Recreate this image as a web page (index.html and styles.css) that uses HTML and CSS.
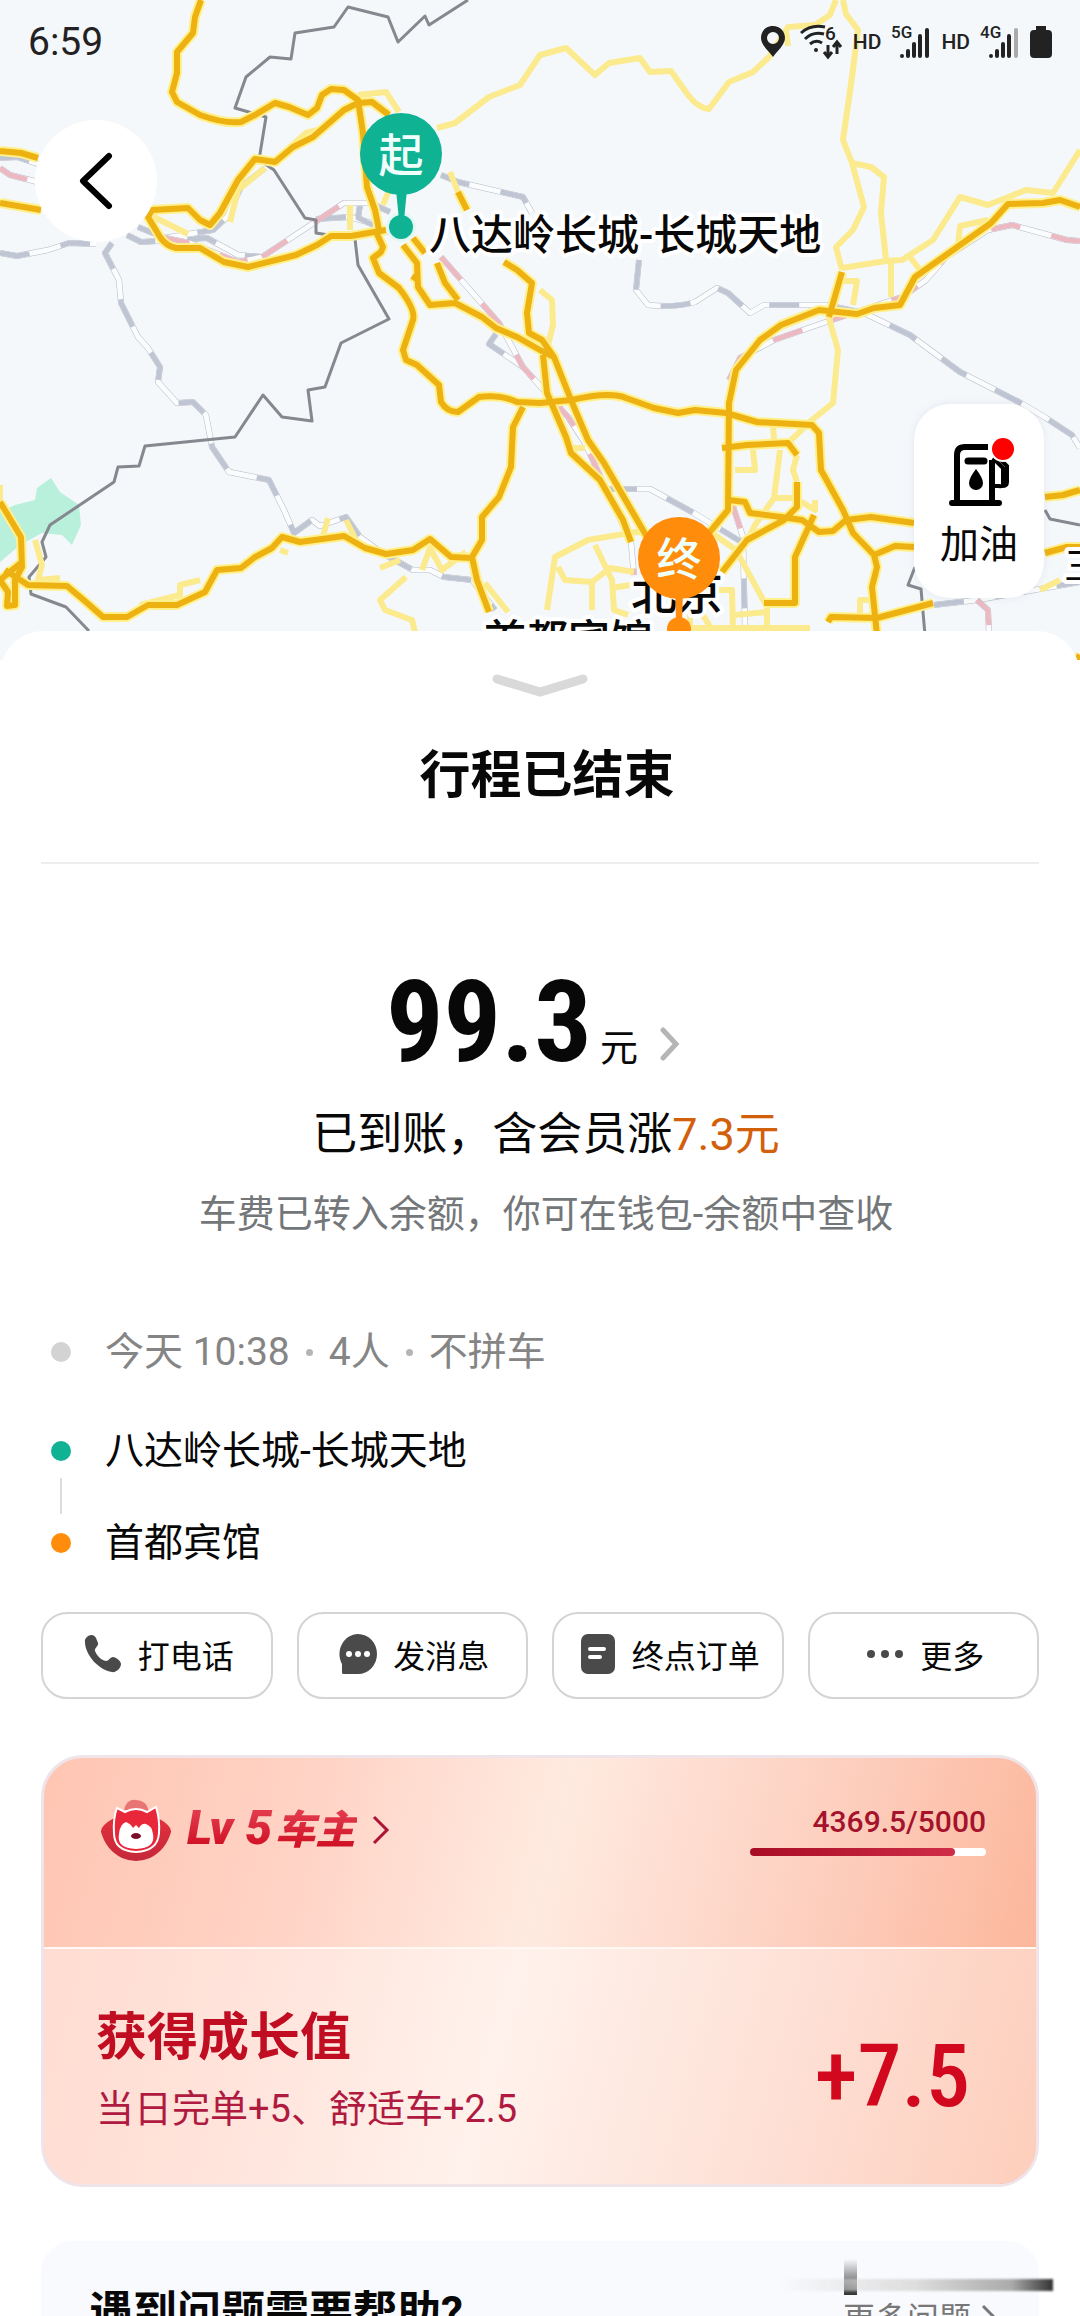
FILE: index.html
```html
<!DOCTYPE html>
<html lang="zh-CN">
<head>
    <meta charset="UTF-8">
    <meta name="viewport" content="width=device-width, initial-scale=1.0">
    <title>行程已结束</title>
    <link rel="stylesheet" href="styles.css">
</head>
<body>
<div class="app">

    <section class="map">
        <svg class="map-canvas" viewBox="0 0 1080 660" role="img" aria-label="路线地图">
            <rect width="1080" height="660" fill="#f5f8fb"/>
            <path fill="#b9f0dc" d="M0 512L15 505L35 500L37 488L51 478L60 492L79 505L81 525L72 545L62 535L42 533L20 545L0 562Z"/>

            <!-- rail lines -->
            <defs>
                <g id="rail">
                    <path d="M0 253L17 256L48 250L69 243L96 244M112 243L105 253L119 280L121 303L138 337L148 348L160 367L158 382L177 403L193 402L206 415L212 447L229 472L269 480L284 510L294 533L312 520L320 526L346 517L360 537L382 553L413 570L430 570L444 577L472 580L495 610"/>
                    <path d="M0 158L17 157L38 164M127 235L141 242L207 238L238 255L262 257"/>
                    <path d="M138 227L165 238L213 230L227 217L241 187L265 168M316 219L350 217L375 224M360 205L358 218L389 232M370 203L390 212"/>
                    <path d="M441 175L458 182L523 197L532 213M639 260L636 290L648 305Q675 308 695 302L717 288L728 293L750 313L764 305L826 305L864 313L910 335L960 372L1019 402L1046 418L1072 435L1080 448"/>
                    <path d="M496 334L489 344L523 367M607 489L650 489L692 512L743 543L745 626M934 605L977 600L1080 582"/>
                </g>
                <g id="rail-pink">
                    <path d="M0 168L10 175L38 182M262 257L344 203L370 203M160 237L190 243L238 262L262 257"/>
                    <path d="M441 257L499 323L523 367L568 417L585 443L605 487L631 542L634 575"/>
                    <path d="M731 500L743 537M977 600L988 610L989 632M774 340L826 322L902 297L926 280L946 257L988 230L1012 225L1067 240L1080 241M729 380L740 358L774 340"/>
                </g>
            </defs>
            <use href="#rail" class="rail-edge"/>
            <use href="#rail" class="rail-gap"/>
            <use href="#rail" class="rail-dash"/>
            <use href="#rail-pink" class="rail-edge"/>
            <use href="#rail-pink" class="rail-gap"/>
            <use href="#rail-pink" class="rail-dash pink"/>

            <!-- region borders -->
            <path class="border" d="M468 0L429 25L425 16L398 42L388 17L348 7L334 27L295 33L291 59L270 57L246 77L235 108L266 117L259 160L274 170L305 218L316 220L316 233L355 239L358 265L389 319L341 343L325 387L308 390L312 421L282 417L263 395L235 437L145 446L139 466L118 467L114 482L50 525L42 542L46 557L29 577L31 594L66 607L89 631M915 567L908 585L921 589L925 635M1045 510L1050 519L1080 525"/>

            <!-- minor roads -->
            <g class="minor">
                <path d="M437 128L455 123L489 97L520 85L540 55L566 48L595 75L609 63L640 58L650 72L671 71L688 95Q698 108 709 109L729 82L753 72L769 57L788 27L815 25L830 15L836 0M786 30L788 46"/>
                <path d="M843 0L846 14L858 30L852 77L843 140L852 163L864 207L853 230L836 247L842 270M852 163L871 167L884 177L881 213L886 260L891 262L891 297"/>
                <path d="M842 268L886 261L902 260L933 240L960 197L988 205L1026 190L1053 193L1080 150M988 220L960 226L958 245M910 257L920 270M842 281L857 281L853 305"/>
                <path d="M358 95L386 92L399 112M290 147L306 133L325 128M150 215L188 234M265 168L238 190L230 222M350 205V230M383 205L389 190M458 192L450 172M540 290L552 300L553 325L548 345M828 315L838 350L833 403L812 420L788 443"/>
                <path d="M415 632L412 620L385 610L380 600L406 577M380 568L400 560M422 570L430 548L442 570L466 552M485 583L508 612M322 540L328 518M346 520L356 540M35 540L42 565L38 580L60 578M140 605L180 595V585L200 580M280 550L288 553M0 485V505"/>
                <path d="M547 610L555 557L588 540L636 532L712 533L736 550L767 607L767 632M592 610V582L565 580L558 567M595 545L612 580L614 610L628 615M592 582L610 568L634 572M612 588L630 585M712 590L732 590L733 630M700 610L712 630M690 612V630M735 615L767 612M860 617V600H872M690 628H810"/>
                <path d="M773 425L774 440M753 450L755 470H735M780 450L774 498L755 525L748 540M774 498L795 498L815 510L815 500M797 455L793 470L797 482M570 448H585M1040 590L1060 580"/>
            </g>

            <!-- highways -->
            <defs>
                <g id="highway">
                    <path d="M201 0L195 17L193 33L177 52L177 73L172 92L177 102L200 115Q225 124 241 122L255 115L275 103L289 107L308 115L317 108L322 95L331 89L344 90L358 100L363 133L367 187L375 210L379 230L377 234L383 247L381 252L373 258L379 273L399 288Q416 310 413 320L403 350L406 360L417 365L439 385L441 402Q447 412 458 412L479 397Q500 394 517 402L540 403L571 400Q610 391 626 398L654 408L678 413L695 410L726 413L757 422L812 425L819 433L821 470L843 510L853 533L874 555L877 567L872 587L877 635"/>
                    <path d="M0 151L21 153L38 158M0 203L41 210M389 115L372 102L358 103L344 110L313 137L293 147L275 162L255 159L238 180L220 213L210 225L200 220L188 208L152 210L148 217L160 237Q166 246 176 248L200 248L224 262L248 267L296 255L317 245L331 236L351 236L386 230"/>
                    <path d="M403 245L417 263L418 287L430 305L455 303L482 317L496 328L517 337L540 350L554 357M412 276L418 280M437 263L445 283L458 300M413 238L425 253M458 192L467 210M504 262L517 270L532 283L527 313L529 333L542 340L554 357L571 400L588 440L604 463L647 537M543 355L547 393L566 437L571 453L600 480L623 520L631 542"/>
                    <path d="M523 407L513 427L511 467L499 497L482 517L482 540L472 557L477 580L489 612M0 502L21 537L22 567L15 580L15 605L7 606L8 592L0 580L22 562M5 570L28 585L67 586L86 602L103 617L127 617L148 605L177 605L205 592L217 570L241 568L255 557L272 548L282 537L300 542L344 536L365 548L386 554L413 550L430 539L451 557L472 558"/>
                    <path d="M1080 207L1060 200L1043 203L1008 204L991 223L915 277L900 305L874 308L857 314L819 310L781 325L760 340L736 370L729 403L728 510L709 533M842 272L829 317M722 448L747 445L788 443L797 455M797 482L797 507L784 520L747 540L722 572M729 500L745 502L750 513L781 517L802 520L819 532L833 531L846 520L871 517L914 523M814 515L795 557L795 603L764 603M874 555L895 546L914 547M828 622L831 617L877 618L933 603M1045 497L1063 495L1080 490M1045 553L1067 547L1080 547M1076 660L1080 655"/>
                </g>
            </defs>
            <use href="#highway" class="highway-glow"/>
            <use href="#highway" class="highway"/>

            <!-- place names and pins -->
            <text class="place" x="429" y="250" font-size="42">八达岭长城-长城天地</text>
            <text class="place" x="631" y="609" font-size="46">北京</text>
            <text class="place" x="484" y="655" font-size="42">首都宾馆</text>
            <text class="place thin" x="1064" y="579" font-size="38">三</text>

            <circle cx="401" cy="227" r="15" fill="#e3f7f4"/>
            <circle cx="401" cy="227" r="12" fill="#10b294"/>
            <path fill="#10b294" d="M396 190H407L404 220H399Z"/>
            <circle cx="401" cy="154" r="41" fill="#10b294"/>
            <text class="pin-text" x="401" y="172" font-size="45">起</text>

            <circle cx="679" cy="629" r="12" fill="#ff8c0a"/>
            <path fill="#ff8c0a" d="M675 590H683L682 622H676Z"/>
            <circle cx="679" cy="558" r="41" fill="#ff8c0a"/>
            <text class="pin-text" x="679" y="576" font-size="45">终</text>
        </svg>

        <header class="status-bar">
            <time class="clock">6:59</time>
            <div class="status-icons">
                <svg width="24" height="32" viewBox="0 0 24 32"><path fill="#222" fill-rule="evenodd" d="M12 0C5 0 0 5 0 12C0 19 8 25 12 31C16 25 24 19 24 12C24 5 19 0 12 0ZM12 6A6 6 0 1 1 12 18A6 6 0 1 1 12 6Z"/></svg>
                <svg class="wifi" width="44" height="36" viewBox="0 0 44 36">
                    <path class="line" d="M2 9Q12 0 26 3M6 15Q14 7 25 10M11 20Q17 15 23 19M29 21V32M25 28L29 33L33 28M38 30V19M34 23L38 18L42 23"/>
                    <circle cx="17" cy="26" r="2" fill="#222"/>
                    <text x="26" y="16" font-size="19">6</text>
                </svg>
                <span class="hd">HD</span>
                <svg class="signal" width="40" height="36" viewBox="0 0 40 36">
                    <text x="0" y="14" font-size="17">5G</text>
                    <path class="bars" d="M11 32V32M17 27V32M23 20V32M29 12V32M36 6V32"/>
                </svg>
                <span class="hd">HD</span>
                <svg class="signal" width="40" height="36" viewBox="0 0 40 36">
                    <text x="0" y="14" font-size="17">4G</text>
                    <path class="bars" d="M11 32V32M17 27V32M23 20V32M29 12V32"/>
                    <path class="bars weak" d="M36 6V32"/>
                </svg>
                <svg width="22" height="32" viewBox="0 0 22 32"><path fill="#222" d="M6 0H16V4H18Q22 4 22 8V28Q22 32 18 32H4Q0 32 0 28V8Q0 4 4 4H6Z"/></svg>
            </div>
        </header>

        <button class="back" aria-label="返回">
            <svg width="34" height="58" viewBox="0 0 34 58"><path d="M30 4L4 29L30 54"/></svg>
        </button>

        <button class="fuel">
            <svg width="68" height="72" viewBox="0 0 68 72">
                <path d="M8 64V19Q8 11 16 11H39M43 24V64" fill="none" stroke="#000" stroke-width="6"/>
                <path d="M3 67H50" stroke="#000" stroke-width="6" stroke-linecap="round"/>
                <path d="M19 25H35" stroke="#000" stroke-width="7" stroke-linecap="round"/>
                <path d="M27 33Q34 42 34 47A7 7 0 0 1 20 47Q20 42 27 33Z"/>
                <path d="M44 22L54 32V48Q54 51 50 50H45M52 24L58 30V46Q58 50 53 50" fill="none" stroke="#000" stroke-width="4"/>
                <circle cx="54" cy="13" r="13" fill="#fff"/>
                <circle cx="54" cy="13" r="11" fill="#fe0000"/>
            </svg>
            <span>加油</span>
        </button>
    </section>

    <main class="sheet">
        <button class="handle" aria-label="收起">
            <svg width="96" height="24" viewBox="0 0 96 24"><path d="M5 5L48 18L91 5"/></svg>
        </button>
        <h1 class="title">行程已结束</h1>

        <section class="income">
            <a class="amount" href="#">
                <strong>99.3</strong><span>元</span>
                <svg width="20" height="34" viewBox="0 0 20 34"><path d="M3 3L16 17L3 31"/></svg>
            </a>
            <p class="credited">已到账，含会员涨<em>7.3元</em></p>
            <p class="hint">车费已转入余额，你可在钱包-余额中查收</p>
        </section>

        <ul class="trip">
            <li class="when">今天 10:38<i></i>4人<i></i>不拼车</li>
            <li class="from">八达岭长城-长城天地</li>
            <li class="to">首都宾馆</li>
        </ul>

        <nav class="actions">
            <button>
                <svg width="38" height="40" viewBox="0 0 38 40"><path fill="#4a4a4a" d="M2 4C5 0 10 0 12 4L14 9C15 12 10 14 11 17C13 22 17 26 22 27C25 27 26 23 29 23C32 23 37 27 37 30C37 34 32 39 28 38C15 36 2 22 1 9Q0 6 2 4Z"/></svg>
                打电话
            </button>
            <button>
                <svg width="38" height="40" viewBox="0 0 38 40"><path fill="#4a4a4a" d="M19 0A19 20 0 0 1 19 40H4Q3 40 3 38V30A19 20 0 0 1 19 0Z"/><g fill="#fff"><circle cx="10" cy="20" r="3"/><circle cx="19" cy="20" r="3"/><circle cx="28" cy="20" r="3"/></g></svg>
                发消息
            </button>
            <button>
                <svg width="36" height="40" viewBox="0 0 36 40"><rect x="1" width="34" height="40" rx="7" fill="#4a4a4a"/><path d="M10 15H24M10 23H20" stroke="#fff" stroke-width="4" stroke-linecap="round"/></svg>
                终点订单
            </button>
            <button>
                <svg width="38" height="40" viewBox="0 0 38 40"><g fill="#4a4a4a"><circle cx="5" cy="20" r="4"/><circle cx="19" cy="20" r="4"/><circle cx="33" cy="20" r="4"/></g></svg>
                更多
            </button>
        </nav>

        <section class="level">
            <div class="level-top">
                <a class="level-name" href="#">
                    <svg width="72" height="64" viewBox="0 0 72 64">
                        <defs><linearGradient id="badge" x1="0" y1="0" x2="0" y2="1"><stop offset="0" stop-color="#e2303c"/><stop offset="1" stop-color="#c4283a"/></linearGradient></defs>
                        <path d="M24 12Q27 0 36 2Q46 2 49 13Z" fill="#e87474"/>
                        <path d="M14 20Q0 28 1 34Q6 52 22 60Q36 66 50 60Q66 52 71 34Q72 28 58 20Z" fill="url(#badge)"/>
                        <path d="M17 10L25 14Q36 8 47 14L56 9Q60 22 59 35Q58 53 36 54Q14 53 14 35Q13 20 17 10Z" fill="#e8283a" stroke="#fff" stroke-width="2"/>
                        <path d="M26 24Q31 26 33 30L36 27L39 30Q42 25 46 26Q52 28 53 36Q56 50 36 51Q16 50 19 36Q20 26 26 24Z" fill="#fff"/>
                        <ellipse cx="36" cy="38" rx="5" ry="3" fill="#7c1028"/>
                    </svg>
                    <span class="level-text"><b>Lv 5</b>车主</span>
                    <svg width="18" height="30" viewBox="0 0 18 30"><path d="M2 2L15 15L2 28" fill="none" stroke="#ae1234" stroke-width="3"/></svg>
                </a>
                <div class="progress">
                    <span>4369.5/5000</span>
                    <div class="track"><div class="fill" style="width: 87%"></div></div>
                </div>
            </div>
            <div class="level-bottom">
                <div>
                    <h2>获得成长值</h2>
                    <p>当日完单+5、舒适车+2.5</p>
                </div>
                <strong class="gain">+7.5</strong>
            </div>
        </section>

        <section class="help">
            <h2>遇到问题需要帮助?</h2>
            <a href="#">更多问题
                <svg width="14" height="24" viewBox="0 0 14 24"><path d="M2 2L12 12L2 22" fill="none" stroke="#777" stroke-width="3"/></svg>
            </a>
            <span class="smear-v"></span>
            <span class="smear-h"></span>
        </section>
    </main>
</div>
</body>
</html>
```
FILE: styles.css
```css
*{
    box-sizing: border-box;
    margin: 0;
    padding: 0;
}
body{
    background-color: #fff;
    color: #080808;
    font-family: Roboto, "Noto Sans CJK SC", sans-serif;
}
button{
    font: inherit;
    color: inherit;
    border: none;
    background: none;
}
a{
    color: inherit;
    text-decoration: none;
}
svg{
    display: block;
    flex: none;
}
.app{
    height: 100vh;
    overflow: hidden;
}

/* map */
.map{
    position: relative;
}
.map-canvas{
    width: 100%;
    height: auto;
}
.map-canvas path{
    stroke-linejoin: round;
}
.rail-edge{
    fill: none;
    stroke: #b4bac4;
    stroke-width: 6;
}
.rail-gap{
    fill: none;
    stroke: #fbfcfd;
    stroke-width: 5;
}
.rail-dash{
    fill: none;
    stroke: #bfc5d3;
    stroke-width: 5;
    stroke-dasharray: 30 32;
}
.pink{
    stroke: #ecb9c2;
}
.border{
    fill: none;
    stroke: #85888e;
    stroke-width: 3;
}
.minor{
    fill: none;
    stroke: #fbea8e;
    stroke-width: 6;
}
.highway{
    fill: none;
    stroke: #edb112;
    stroke-width: 6;
}
.highway-glow{
    fill: none;
    stroke: #fff08c;
    stroke-width: 10;
}
.place{
    fill: #080808;
    font-weight: 500;
    stroke: #fff;
    stroke-width: 8px;
    stroke-linejoin: round;
    paint-order: stroke;
}
.thin{
    font-weight: 400;
}
.pin-text{
    fill: #effffb;
    font-weight: 500;
    text-anchor: middle;
}
.status-bar{
    position: absolute;
    top: 0;
    left: 0;
    right: 0;
    display: flex;
    justify-content: space-between;
    align-items: center;
    height: 84px;
    padding: 0 28px;
    color: #222;
}
.clock{
    font-size: 39px;
}
.status-icons{
    display: flex;
    align-items: center;
    gap: 10px;
}
.status-icons text{
    fill: #222;
    font-weight: 500;
}
.wifi{
    margin-left: 4px;
}
.wifi .line{
    fill: none;
    stroke: #222;
    stroke-width: 3;
}
.hd{
    font-size: 21px;
    font-weight: 500;
}
.bars{
    stroke: #222;
    stroke-width: 4;
    stroke-linecap: round;
}
.weak{
    stroke: #aaa;
}
.back{
    position: absolute;
    top: 120px;
    left: 35px;
    display: grid;
    place-items: center;
    width: 122px;
    height: 122px;
    border-radius: 50%;
    background-color: #fff;
}
.back path{
    fill: none;
    stroke: #000;
    stroke-width: 6;
    stroke-linecap: round;
    stroke-linejoin: round;
}
.fuel{
    position: absolute;
    top: 404px;
    right: 36px;
    display: flex;
    flex-direction: column;
    align-items: center;
    gap: 8px;
    width: 130px;
    height: 194px;
    padding-top: 32px;
    border-radius: 36px;
    background-color: #fff;
    box-shadow: 0 0 8px rgba(90, 120, 160, .12);
    font-size: 39px;
    line-height: 58px;
}
.fuel svg{
    margin-left: 8px;
}

/* bottom sheet */
.sheet{
    position: relative;
    margin-top: -29px;
    padding: 43px 41px 0;
    border-radius: 44px 44px 0 0;
    background-color: #fff;
}
.handle{
    display: block;
    margin: 0 auto;
}
.handle path{
    fill: none;
    stroke: #d9d9d9;
    stroke-width: 9;
    stroke-linecap: round;
}
.title{
    margin-top: 48px;
    padding: 0 0 56px 14px;
    border-bottom: 2px solid #eee;
    font-size: 51px;
    font-weight: 700;
    line-height: 60px;
    text-align: center;
}
.income{
    padding-left: 12px;
    text-align: center;
}
.amount{
    display: flex;
    justify-content: center;
    align-items: baseline;
    margin-top: 108px;
    padding-right: 26px;
    line-height: 100px;
}
.amount strong{
    font-family: "Roboto Condensed", "Liberation Sans Narrow", Roboto, sans-serif;
    font-size: 114px;
    font-weight: 700;
}
.amount span{
    margin: 0 22px 0 8px;
    font-size: 38px;
    line-height: 38px;
}
.amount path{
    fill: none;
    stroke: #b5b5b5;
    stroke-width: 5;
    stroke-linecap: round;
}
.credited{
    margin-top: 33px;
    font-size: 45px;
    line-height: 60px;
}
.credited em{
    color: #d2600a;
    font-style: normal;
}
.hint{
    margin-top: 24px;
    color: #74777a;
    font-size: 38px;
    line-height: 50px;
}

/* trip */
.trip{
    margin-top: 88px;
    padding-left: 10px;
    list-style: none;
    font-size: 39px;
    line-height: 50px;
}
.trip li{
    position: relative;
    display: flex;
    align-items: center;
}
.trip li::before{
    content: "";
    width: 20px;
    height: 20px;
    margin-right: 34px;
    border-radius: 50%;
    background-color: #d3d3d3;
}
.trip .when{
    color: #858585;
}
.when i{
    width: 7px;
    height: 7px;
    margin: 0 16px;
    border-radius: 50%;
    background-color: #b5b5b5;
}
.trip .from{
    margin: 49px 0 42px;
}
.trip .from::before{
    background-color: #10b294;
}
.trip .from::after{
    content: "";
    position: absolute;
    top: 52px;
    left: 9px;
    width: 2px;
    height: 36px;
    background-color: #ddd;
}
.trip .to::before{
    background-color: #ff8c0a;
}
.actions{
    display: grid;
    grid-template-columns: repeat(4, 1fr);
    gap: 24px;
    margin-top: 44px;
}
.actions button{
    display: flex;
    justify-content: center;
    align-items: center;
    gap: 16px;
    height: 87px;
    padding: 0 0 3px 4px;
    border: 2px solid #d3d4d6;
    border-radius: 26px;
    font-size: 32px;
}

/* member level */
.level{
    margin-top: 56px;
    overflow: hidden;
    border: 3px solid #efe4ea;
    border-radius: 42px;
    background-image: linear-gradient(105deg, #ffc5b2 0%, #ffd3c5 25%, #ffeae0 48%, #fdd0c0 72%, #fcb092 100%);
    background-origin: border-box;
}
.level-top{
    display: flex;
    justify-content: space-between;
    align-items: flex-start;
    height: 191px;
    padding: 38px 50px 0 56px;
    border-bottom: 2px solid #fff8f5;
}
.level-name{
    display: flex;
    align-items: center;
    gap: 15px;
}
.level-text{
    padding-right: 2px;
    background-image: linear-gradient(#e23a4c 25%, #d01024 75%);
    background-clip: text;
    color: transparent;
    font-size: 40px;
    font-weight: 900;
    font-style: italic;
    line-height: 64px;
}
.level-text b{
    margin-right: 3px;
    font-size: 48px;
    font-weight: 900;
}
.progress{
    width: 236px;
    padding-top: 8px;
    color: #a5122b;
    font-size: 30px;
    font-weight: 500;
    line-height: 36px;
    text-align: right;
}
.track{
    height: 8px;
    margin-top: 8px;
    border-radius: 4px;
    background-color: #fff;
}
.fill{
    height: 100%;
    border-radius: 4px;
    background-image: linear-gradient(90deg, #a80c24, #cf2d48);
}
.level-bottom{
    display: flex;
    justify-content: space-between;
    align-items: center;
    height: 235px;
    padding: 8px 66px 0 52px;
    background-color: rgba(255, 255, 255, .38);
}
.level-bottom h2{
    color: #c00d22;
    font-size: 51px;
    font-weight: 700;
    line-height: 76px;
}
.level-bottom p{
    color: #b01a40;
    font-size: 38px;
    line-height: 66px;
}
.gain{
    padding-top: 10px;
    color: #d2081f;
    font-family: "Roboto Condensed", "Liberation Sans Narrow", Roboto, sans-serif;
    font-size: 88px;
    font-weight: 500;
}

/* help */
.help{
    position: relative;
    display: flex;
    justify-content: space-between;
    align-items: center;
    margin-top: 54px;
    padding: 40px 44px 40px 48px;
    border-radius: 32px;
    background-color: #f9fafe;
}
.help h2{
    font-size: 44px;
    font-weight: 700;
    line-height: 64px;
}
.help a{
    display: flex;
    align-items: center;
    gap: 10px;
    padding-top: 6px;
    color: #777;
    font-size: 32px;
}
.smear-v{
    position: absolute;
    top: 18px;
    right: 182px;
    width: 13px;
    height: 36px;
    background-image: linear-gradient(transparent, #333);
}
.smear-h{
    position: absolute;
    top: 38px;
    right: -14px;
    width: 274px;
    height: 12px;
    background-image: linear-gradient(90deg, transparent, #ddd 50%, #aaa 85%, #333);
    filter: blur(1px);
}
```
